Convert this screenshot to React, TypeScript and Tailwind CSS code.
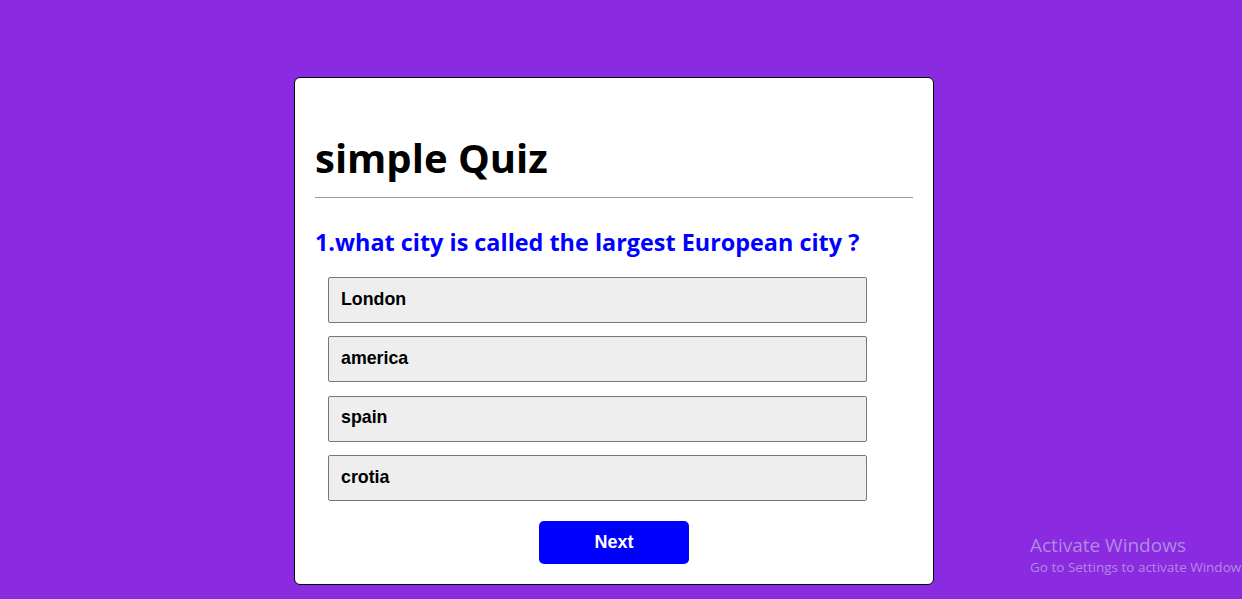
const options = ["London", "america", "spain", "crotia"];

export default function App() {
  return (
    <div className="relative min-h-[599px] w-full overflow-hidden bg-[#8a2be2] pt-[77px] pr-[14px]">
      <div className="mx-auto flex w-[640px] flex-col rounded-md border border-black bg-white px-5 pt-[54px] pb-5">
        <h1 className="border-b border-[#999] pb-[13px] font-['Open_Sans',sans-serif] text-[40px] leading-[52px] font-bold text-black">
          simple Quiz
        </h1>
        <h2 className="mt-[29px] font-['Open_Sans',sans-serif] text-[23.4px] leading-[30px] font-bold text-[#0000ff]">
          1.what city is called the largest European city ?
        </h2>
        <div className="mt-5 flex flex-col gap-[13.3px] pl-[13px]">
          {options.map((o) => (
            <button
              key={o}
              className="h-[46px] w-[539px] rounded-[2px] border border-[#777] bg-[#eeeeee] pb-[2px] pl-3 text-left font-['Liberation_Sans',Arial,sans-serif] text-[17.8px] font-bold text-black"
            >
              {o}
            </button>
          ))}
        </div>
        <button className="mx-auto mt-5 h-[43px] w-[150px] rounded-[5px] bg-[#0000ff] font-['Liberation_Sans',Arial,sans-serif] text-[18px] font-bold text-white">
          Next
        </button>
      </div>
      <div className="absolute top-[532px] left-[1030px] font-['Open_Sans',sans-serif] whitespace-nowrap text-[#b08ae0]">
        <div className="text-[19px] leading-[26px]">Activate Windows</div>
        <div className="text-[13.5px] leading-[18px]">Go to Settings to activate Windows.</div>
      </div>
    </div>
  );
}
